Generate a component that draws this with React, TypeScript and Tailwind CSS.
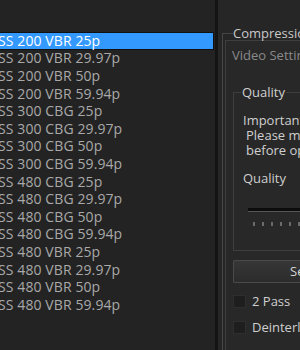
import React from "react";

const rows = [
  "SS 200 VBR 25p",
  "SS 200 VBR 29.97p",
  "SS 200 VBR 50p",
  "SS 200 VBR 59.94p",
  "SS 300 CBG 25p",
  "SS 300 CBG 29.97p",
  "SS 300 CBG 50p",
  "SS 300 CBG 59.94p",
  "SS 480 CBG 25p",
  "SS 480 CBG 29.97p",
  "SS 480 CBG 50p",
  "SS 480 CBG 59.94p",
  "SS 480 VBR 25p",
  "SS 480 VBR 29.97p",
  "SS 480 VBR 50p",
  "SS 480 VBR 59.94p",
];

const font = { fontFamily: '"Open Sans", "Noto Sans", sans-serif' };

export default function App() {
  return (
    <div
      className="w-[300px] h-[350px] flex overflow-hidden bg-[#222222] text-[13px]"
      style={font}
    >
      {/* list */}
      <div className="w-[215px] shrink-0 flex flex-col bg-[#232323] pt-[32px]">
        {rows.map((r, i) => (
          <div
            key={r}
            className={
              i === 0
                ? "h-[17.6px] flex items-center bg-[#3399ff] text-white border border-[#111] border-l-0 w-[214px] leading-none"
                : "h-[17.6px] flex items-center text-[#a9a9a9] leading-none"
            }
          >
            <span className="-ml-[2px] whitespace-nowrap text-[14px] tracking-[0.1px]">{r}</span>
          </div>
        ))}
      </div>

      {/* right panel */}
      <div className="flex-1 border-l-[3px] border-[#141414] bg-[#262626] pl-[4px]">
        <fieldset className="mt-[26px] border-t border-l border-[#464646] h-[400px] pl-[2px] pt-0">
          <legend className="ml-[8px] px-0 text-[#c9c9c9] whitespace-nowrap leading-[14px]">
            Compression Settings
          </legend>
          <div className="border-t border-l border-[#3e3e3e] h-[400px] bg-[#282828]">
            <div className="pl-[6px] pt-[3px] h-[27px] flex items-center text-[#8a8a8a] whitespace-nowrap">
              Video Settings
            </div>
            <fieldset className="ml-[7px] mt-[17px] border border-r-0 border-[#3e3e3e] h-[166px] pl-[9px]">
              <legend className="-ml-[2px] px-[1px] text-[#d0d0d0] leading-[14px]">Quality</legend>
              <div className="text-[#cfcfcf] whitespace-nowrap leading-[15px] mt-[14px]">
                <div>Important</div>
                <div className="pl-[3px]">Please make sure</div>
                <div className="pl-[3px]">before opening</div>
              </div>
              <div className="mt-[13px] text-[#cfcfcf] leading-[15px]">Quality</div>
              <div className="mt-[22px] ml-[5px] h-[4px] bg-[#0d0d0d] border-b border-[#555]" />
              <div className="mt-[10px] ml-[10px] flex gap-[7px]">
                {Array.from({ length: 6 }).map((_, i) => (
                  <div key={i} className="w-[2px] h-[4px] bg-[#6a6a6a]" />
                ))}
              </div>
            </fieldset>
            <div className="ml-[7px] mt-[9px] h-[23px] border border-[#4a4a4a] border-r-0 rounded-l-[2px] bg-gradient-to-b from-[#363636] to-[#2c2c2c] flex items-center pl-[56px] text-[#d6d6d6] whitespace-nowrap">
              Settings
            </div>
            <div className="ml-[7px] mt-[9px] flex items-center gap-[6px] text-[#cfcfcf] whitespace-nowrap">
              <div className="w-[13px] h-[13px] bg-[#1e1e1e] border border-[#2e2e2e]" />
              <span>2 Pass</span>
            </div>
            <div className="ml-[7px] mt-[6px] flex items-center gap-[6px] text-[#cfcfcf] whitespace-nowrap">
              <div className="w-[13px] h-[13px] bg-[#1e1e1e] border border-[#2e2e2e]" />
              <span>Deinterlace</span>
            </div>
          </div>
        </fieldset>
      </div>
    </div>
  );
}
